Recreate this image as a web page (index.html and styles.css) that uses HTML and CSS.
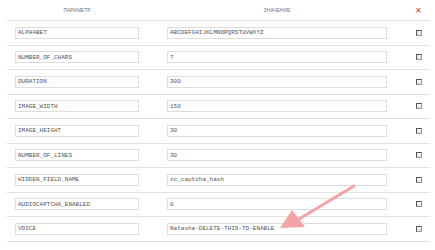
FILE: index.html
```html
<!DOCTYPE html>
<html lang="ru">
<head>
    <meta charset="UTF-8">
    <title>Параметры капчи</title>
    <link rel="stylesheet" href="styles.css">
</head>
<body>
    <div class="wrap">
        <table class="params">
            <thead>
                <tr>
                    <th class="col-name">ПАРАМЕТР</th>
                    <th class="col-value">ЗНАЧЕНИЕ</th>
                    <th class="col-del"><span class="del">&#x2715;</span></th>
                </tr>
            </thead>
            <tbody>
                <tr>
                    <td class="col-name"><input class="name" type="text" value="ALPHABET"></td>
                    <td class="col-value"><input class="value" type="text" value="ABCDEFGHIJKLMNOPQRSTUVWXYZ"></td>
                    <td class="col-del"><input type="checkbox"></td>
                </tr>
                <tr>
                    <td class="col-name"><input class="name" type="text" value="NUMBER_OF_CHARS"></td>
                    <td class="col-value"><input class="value" type="text" value="7"></td>
                    <td class="col-del"><input type="checkbox"></td>
                </tr>
                <tr>
                    <td class="col-name"><input class="name" type="text" value="DURATION"></td>
                    <td class="col-value"><input class="value" type="text" value="300"></td>
                    <td class="col-del"><input type="checkbox"></td>
                </tr>
                <tr>
                    <td class="col-name"><input class="name" type="text" value="IMAGE_WIDTH"></td>
                    <td class="col-value"><input class="value" type="text" value="150"></td>
                    <td class="col-del"><input type="checkbox"></td>
                </tr>
                <tr>
                    <td class="col-name"><input class="name" type="text" value="IMAGE_HEIGHT"></td>
                    <td class="col-value"><input class="value" type="text" value="30"></td>
                    <td class="col-del"><input type="checkbox"></td>
                </tr>
                <tr>
                    <td class="col-name"><input class="name" type="text" value="NUMBER_OF_LINES"></td>
                    <td class="col-value"><input class="value" type="text" value="30"></td>
                    <td class="col-del"><input type="checkbox"></td>
                </tr>
                <tr>
                    <td class="col-name"><input class="name" type="text" value="HIDDEN_FIELD_NAME"></td>
                    <td class="col-value"><input class="value" type="text" value="zc_captcha_hash"></td>
                    <td class="col-del"><input type="checkbox"></td>
                </tr>
                <tr>
                    <td class="col-name"><input class="name" type="text" value="AUDIOCAPTCHA_ENABLED"></td>
                    <td class="col-value"><input class="value" type="text" value="0"></td>
                    <td class="col-del"><input type="checkbox"></td>
                </tr>
                <tr>
                    <td class="col-name"><input class="name" type="text" value="VOICE"></td>
                    <td class="col-value"><input class="value" type="text" value="Natasha-DELETE-THIS-TO-ENABLE"></td>
                    <td class="col-del"><input type="checkbox"></td>
                </tr>
            </tbody>
        </table>

        <!-- стрелка-подсказка поверх таблицы -->
        <svg class="hint-arrow" width="80" height="50" viewBox="0 0 80 50">
            <line x1="76" y1="3" x2="16" y2="39" stroke="#f5a3a6" stroke-width="3" stroke-linecap="round"/>
            <polygon points="2,45 14,27 27,44" fill="#f5a3a6"/>
        </svg>
    </div>
</body>
</html>
```

FILE: styles.css
```css
body {
    margin: 0;
    background-color: #fff;
    font-family: "Liberation Sans", Arial, sans-serif;
}
.wrap {
    position: relative;
    padding: 0 5px 0 7px;
}
.params {
    width: 100%;
    border-collapse: collapse;
    table-layout: fixed;
}
.params th {
    height: 20px;
    padding: 0;
    font-size: 5px;
    font-weight: normal;
    color: #777;
    text-align: center;
    border-bottom: 1px solid #ddd;
}
.params td {
    height: 23.5px;
    padding: 0;
    border-bottom: 1px solid #e2e2e2;
}
.col-name {
    width: 140px;
}
.col-del {
    width: 23px;
    text-align: center;
}
.params td.col-name {
    padding-left: 8px;
}
.params td.col-value {
    padding-left: 20px;
}
.del {
    color: #d43a3a;
    font-size: 8px;
}
input[type="text"] {
    display: block;
    height: 12px;
    padding: 0 0 0 2px;
    border: 1px solid #ddd;
    background-color: #fff;
    box-sizing: border-box;
    font-family: "Liberation Mono", "Courier New", monospace;
    font-size: 6px;
    color: #555;
}
input.name {
    width: 124px;
}
input.value {
    width: 220px;
}
input[type="checkbox"] {
    appearance: none;
    display: block;
    width: 6px;
    height: 6px;
    margin: 0 auto;
    border: 1px solid #555;
    border-right-color: #999;
    border-bottom-color: #999;
    background: linear-gradient(#fff, #ddd);
    box-sizing: border-box;
}
.hint-arrow {
    position: absolute;
    left: 278px;
    top: 183px;
}
```
